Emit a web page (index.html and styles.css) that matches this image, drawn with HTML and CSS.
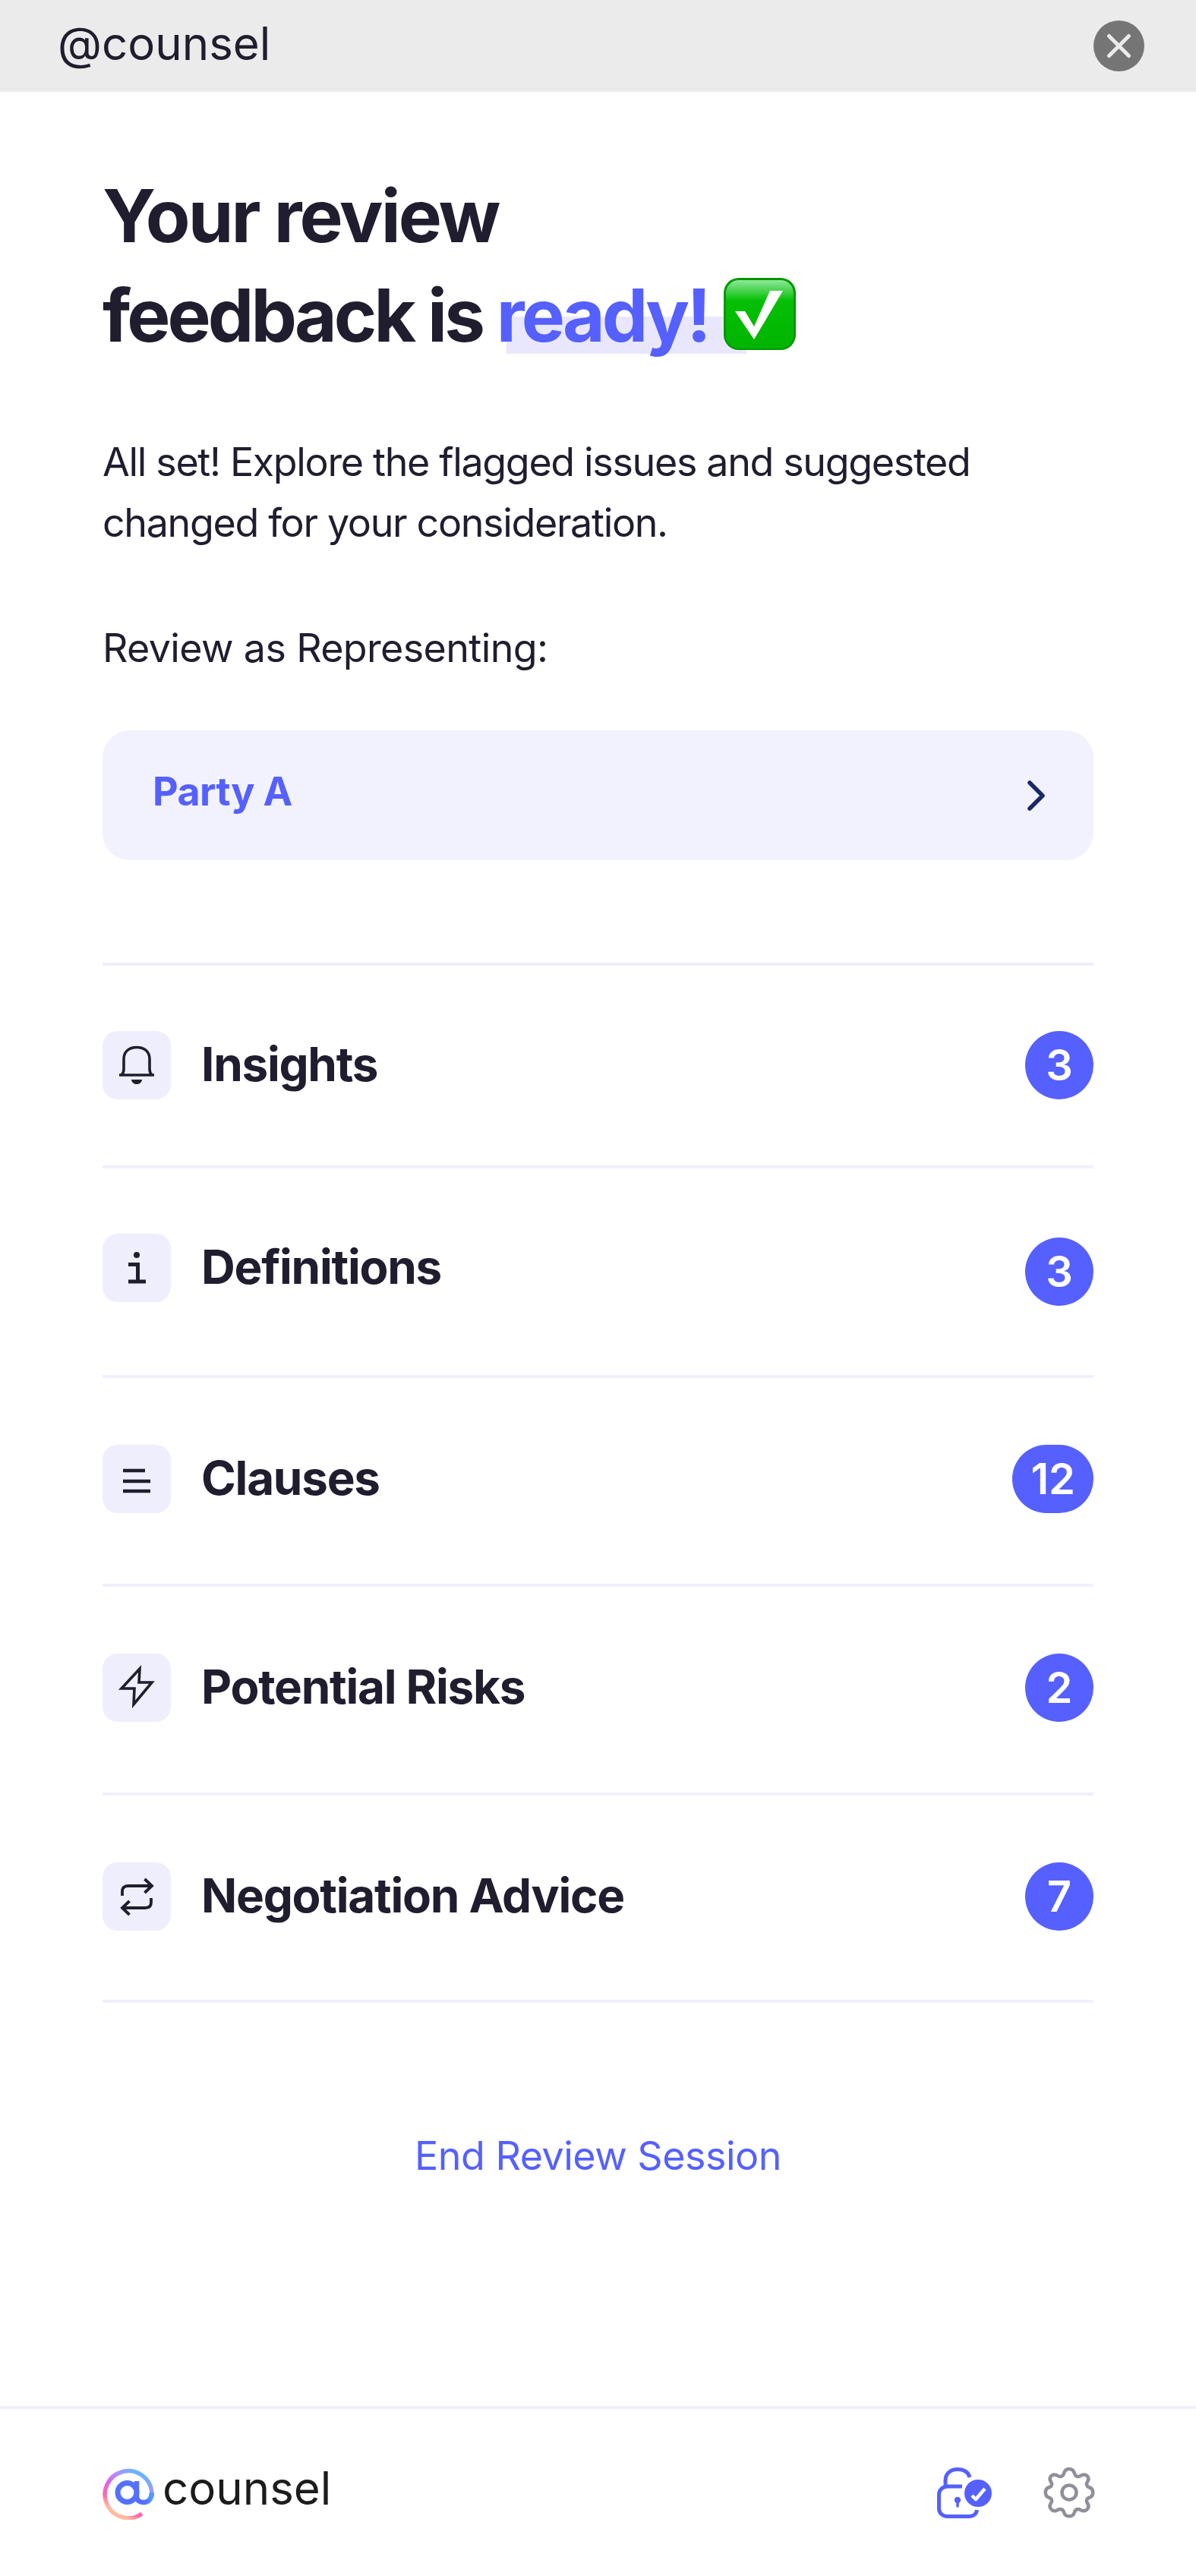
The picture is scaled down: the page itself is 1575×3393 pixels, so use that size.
FILE: index.html
```html
<!DOCTYPE html>
<html lang="en">
<head>
    <meta charset="UTF-8">
    <meta name="viewport" content="width=device-width, initial-scale=1.0">
    <title>@counsel - Review feedback</title>
    <link rel="stylesheet" href="styles.css">
</head>
<body>
    <!-- Top bar -->
    <header class="topbar">
        <span class="topbar-title">@counsel</span>
        <button class="close-btn" aria-label="Close">
            <svg viewBox="0 0 67 67" width="67" height="67">
                <path d="M20.5 20.5 L46.5 46.5 M46.5 20.5 L20.5 46.5" fill="none" stroke="#ebebeb" stroke-width="5" stroke-linecap="round"/>
            </svg>
        </button>
    </header>

    <main class="content">
        <h1 class="title">Your review<br><span class="title-second">feedback is <span class="ready">ready!</span></span>
            <svg class="emoji" viewBox="0 0 95 95" width="95" height="95">
                <defs>
                    <linearGradient id="boxFill" x1="0" y1="0" x2="0" y2="1">
                        <stop offset="0" stop-color="#8ee79a"/>
                        <stop offset="0.3" stop-color="#05bf05"/>
                        <stop offset="1" stop-color="#00b400"/>
                    </linearGradient>
                </defs>
                <rect x="0" y="0" width="95" height="95" rx="20" fill="#049604"/>
                <rect x="3" y="3" width="89" height="90" rx="17" fill="url(#boxFill)"/>
                <path d="M15 44 H28 L40 64 L61 17 H78 L40 81 Z" fill="#fff"/>
            </svg>
        </h1>

        <p class="intro">All set! Explore the flagged issues and suggested changed for your consideration.</p>
        <p class="representing">Review as Representing:</p>

        <div class="party">
            <span class="party-name">Party A</span>
            <svg viewBox="0 0 30 44" width="30" height="44">
                <path d="M6 5 L23 22 L6 39" fill="none" stroke="#1b2a66" stroke-width="5.5" stroke-linecap="round" stroke-linejoin="round"/>
            </svg>
        </div>

        <ul class="sections">
            <li class="section-row">
                <span class="icon-box">
                    <svg viewBox="0 0 90 90" width="90" height="90">
                        <path d="M22 58 H68 M25 58 C27 56 28 53 28 50 V37 C28 27 35 21.5 45 21.5 C55 21.5 62 27 62 37 V50 C62 53 63 56 65 58" fill="none" stroke="#1f1d2e" stroke-width="3.6"/>
                        <path d="M38 64 H52 C51 72 39 72 38 64 Z" fill="#1f1d2e"/>
                    </svg>
                </span>
                <span class="section-name">Insights</span>
                <span class="badge">3</span>
            </li>
            <li class="section-row">
                <span class="icon-box">
                    <svg viewBox="0 0 90 90" width="90" height="90">
                        <circle cx="45" cy="28" r="4" fill="#1f1d2e"/>
                        <path d="M34 40.5 H46.5 V63 M34 63 H57" fill="none" stroke="#1f1d2e" stroke-width="5"/>
                    </svg>
                </span>
                <span class="section-name">Definitions</span>
                <span class="badge">3</span>
            </li>
            <li class="section-row">
                <span class="icon-box">
                    <svg viewBox="0 0 90 90" width="90" height="90">
                        <path d="M27 34 H56 M27 48 H63 M27 61 H63" fill="none" stroke="#1f1d2e" stroke-width="4.6"/>
                    </svg>
                </span>
                <span class="section-name">Clauses</span>
                <span class="badge">12</span>
            </li>
            <li class="section-row">
                <span class="icon-box">
                    <svg viewBox="0 0 90 90" width="90" height="90">
                        <path d="M49 20 L25 46 H42 L41 67 L65 38 H48 Z" fill="none" stroke="#1f1d2e" stroke-width="3.6"/>
                    </svg>
                </span>
                <span class="section-name">Potential Risks</span>
                <span class="badge">2</span>
            </li>
            <li class="section-row">
                <span class="icon-box">
                    <svg viewBox="0 0 90 90" width="90" height="90">
                        <path d="M26 44 V38 C26 33 29 31 34 31 H65 M55.5 22 L65 31 L55.5 40 M64 47 V53 C64 58 61 60 56 60 H26 M35.5 51 L26 60 L35.5 69" fill="none" stroke="#1f1d2e" stroke-width="3.8"/>
                    </svg>
                </span>
                <span class="section-name">Negotiation Advice</span>
                <span class="badge">7</span>
            </li>
        </ul>

        <a class="end-link" href="#">End Review Session</a>
    </main>

    <!-- Footer with logo and actions -->
    <footer class="footer">
        <div class="logo">
            <svg viewBox="0 0 68 72" width="68" height="72">
                <defs>
                    <linearGradient id="logoRing" x1="1" y1="0.1" x2="0.45" y2="1">
                        <stop offset="0" stop-color="#4fc0ff"/>
                        <stop offset="0.3" stop-color="#a894ff"/>
                        <stop offset="0.55" stop-color="#d868f0"/>
                        <stop offset="0.82" stop-color="#ff66ac"/>
                        <stop offset="1" stop-color="#ffbca0"/>
                    </linearGradient>
                    <linearGradient id="logoInner" x1="0" y1="0" x2="1" y2="0">
                        <stop offset="0.6" stop-color="#5570ff"/>
                        <stop offset="1" stop-color="#4f9cff"/>
                    </linearGradient>
                </defs>
                <path d="M52 64 A31 31 0 1 1 65 36" fill="none" stroke="url(#logoRing)" stroke-width="5.5"/>
                <circle cx="32.5" cy="36" r="12.5" fill="none" stroke="#5570ff" stroke-width="7"/>
                <path d="M45 21 V41 C45 47 49 49 54 49 C61 49 65 44 65 36" fill="none" stroke="url(#logoInner)" stroke-width="6.5"/>
            </svg>
            <span class="logo-text">counsel</span>
        </div>
        <div class="footer-actions">
            <svg viewBox="0 0 72 67" width="72" height="67">
                <path d="M11 24 V17 C11 8 18 2.5 27 2.5 C35 2.5 41 6 43 13 M33 25 H14 C7 25 2.5 30 2.5 36 V54 C2.5 60 7 64.5 14 64.5 H42 C48 64.5 52 61 52.5 56" fill="none" stroke="#5560ff" stroke-width="5"/>
                <circle cx="27" cy="43" r="4.2" fill="#5560ff"/>
                <path d="M27 44 V51" stroke="#5560ff" stroke-width="3.5" stroke-linecap="round"/>
                <circle cx="54" cy="34" r="18" fill="#5560ff"/>
                <path d="M46 37 L51 42 L63 28" fill="none" stroke="#fff" stroke-width="4.5" stroke-linejoin="round"/>
            </svg>
            <svg viewBox="0 0 68 68" width="68" height="68">
                <circle cx="34" cy="34" r="9.5" fill="none" stroke="#8f8f9a" stroke-width="4.5"/>
                <path d="M27 9 C29 1 39 1 41 9 C42 13 46 14 49 12 C56 8 62 14 58 20 C56 23 57 26 60 27 C67 29 67 39 60 41 C57 42 56 45 58 48 C62 54 56 61 49 57 C46 55 42 56 41 60 C39 67 29 67 27 60 C26 56 22 55 19 57 C12 61 6 54 10 48 C12 45 11 42 8 41 C1 39 1 29 8 27 C11 26 12 23 10 20 C6 14 12 8 19 12 C22 14 26 13 27 9 Z" fill="none" stroke="#8f8f9a" stroke-width="4.5"/>
            </svg>
        </div>
    </footer>
</body>
</html>
```

FILE: styles.css
```css
* {
    box-sizing: border-box;
}
body {
    font-family: 'Inter', 'Liberation Sans', sans-serif;
    display: flex;
    flex-direction: column;
    height: 100vh;
    margin: 0;
    background-color: #ffffff;
    color: #1f1d2e;
}
.topbar {
    display: flex;
    align-items: center;
    justify-content: space-between;
    height: 121px;
    padding: 0 68px 0 76px;
    background-color: #ebebeb;
    flex-shrink: 0;
}
.topbar-title {
    padding-bottom: 8px;
    font-size: 60px;
    color: #1f1d2e;
}
.close-btn {
    width: 67px;
    height: 67px;
    padding: 0;
    border: none;
    border-radius: 50%;
    background-color: #757575;
    display: flex;
}
.content {
    flex: 1;
    padding: 0 135px;
    display: flex;
    flex-direction: column;
}
.title {
    margin: 98px 0 0;
    font-size: 96px;
    font-weight: 700;
    line-height: 131px;
    letter-spacing: -2.9px;
}
.title-second {
    letter-spacing: -3.9px;
}
.ready {
    position: relative;
    color: #5560ff;
}
/* highlight bar runs on behind the emoji */
.ready::after {
    content: "";
    position: absolute;
    left: 13px;
    right: -50px;
    bottom: 7px;
    height: 49px;
    background-color: #e9e7fd;
    z-index: -1;
}
.emoji {
    vertical-align: -11px;
}
.intro {
    margin: 88px 0 0;
    font-size: 52px;
    line-height: 80px;
    letter-spacing: -1.35px;
}
.representing {
    margin: 85px 0 0;
    font-size: 52px;
    line-height: 80px;
    letter-spacing: -0.65px;
}
.party {
    display: flex;
    align-items: center;
    justify-content: space-between;
    height: 171px;
    margin-top: 68px;
    padding: 0 60px 0 66px;
    border-radius: 36px;
    background-color: #f2f2fe;
}
.party-name {
    padding-bottom: 10px;
    color: #5560ff;
    font-size: 52px;
    font-weight: 700;
    letter-spacing: -0.6px;
}
.sections {
    list-style: none;
    margin: 135px 0 0;
    padding: 0;
    border-top: 4px solid #f0f0fc;
}
.section-row {
    display: flex;
    align-items: flex-start;
    padding: 88px 0 93px;
    border-bottom: 4px solid #f0f0fc;
}
.section-row:nth-child(1) {
    padding: 86px 0 87px;
}
.section-row:nth-child(2) {
    padding: 86px 0 91px;
}
.section-row:nth-child(2) .badge {
    margin-top: 5px;
}
.section-row:nth-child(5) {
    padding-bottom: 91px;
}
.icon-box {
    display: flex;
    width: 90px;
    height: 90px;
    margin-right: 40px;
    border-radius: 20px;
    background-color: #eeeefd;
}
.section-name {
    flex: 1;
    padding-bottom: 3px;
    font-size: 62px;
    font-weight: 700;
    line-height: 87px;
    letter-spacing: -1.27px;
}
.badge {
    min-width: 90px;
    height: 90px;
    padding: 0 24px;
    border-radius: 45px;
    background-color: #5560ff;
    color: #ffffff;
    font-size: 56px;
    font-weight: 600;
    line-height: 90px;
    text-align: center;
}
.end-link {
    align-self: center;
    margin-top: 170px;
    font-size: 52px;
    letter-spacing: -0.5px;
    color: #5560ff;
    text-decoration: none;
}
.footer {
    display: flex;
    align-items: center;
    justify-content: space-between;
    height: 224px;
    padding: 0 133px 0 135px;
    border-top: 4px solid #f0f0fc;
    flex-shrink: 0;
}
.logo {
    display: flex;
    align-items: center;
    gap: 11px;
}
.logo-text {
    padding-bottom: 12px;
    font-size: 60px;
    color: #1c1c1c;
}
.footer-actions {
    display: flex;
    align-items: center;
    gap: 68px;
}
```
